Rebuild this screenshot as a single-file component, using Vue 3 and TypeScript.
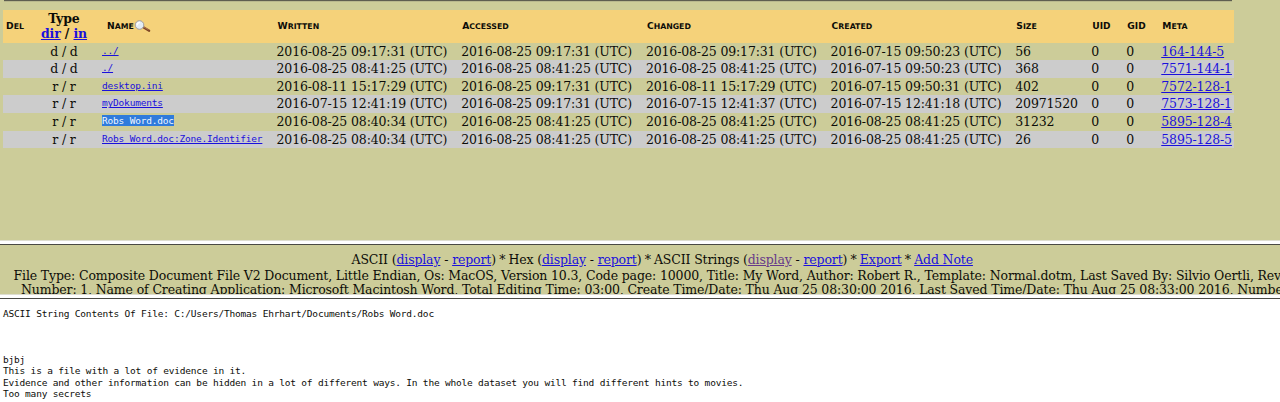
<script setup lang="ts">
interface Entry {
  type: string
  name: string
  dates: string[]
  size: string
  meta: string
  selected?: boolean
}

const columns: string[] = ['Written', 'Accessed', 'Changed', 'Created', 'Size', 'UID', 'GID', 'Meta']

const entries: Entry[] = [
  { type: 'd / d', name: '../', dates: ['2016-08-25 09:17:31', '2016-08-25 09:17:31', '2016-08-25 09:17:31', '2016-07-15 09:50:23'], size: '56', meta: '164-144-5' },
  { type: 'd / d', name: './', dates: ['2016-08-25 08:41:25', '2016-08-25 08:41:25', '2016-08-25 08:41:25', '2016-07-15 09:50:23'], size: '368', meta: '7571-144-1' },
  { type: 'r / r', name: 'desktop.ini', dates: ['2016-08-11 15:17:29', '2016-08-25 09:17:31', '2016-08-11 15:17:29', '2016-07-15 09:50:31'], size: '402', meta: '7572-128-1' },
  { type: 'r / r', name: 'myDokuments', dates: ['2016-07-15 12:41:19', '2016-08-25 09:17:31', '2016-07-15 12:41:37', '2016-07-15 12:41:18'], size: '20971520', meta: '7573-128-1' },
  { type: 'r / r', name: 'Robs Word.doc', dates: ['2016-08-25 08:40:34', '2016-08-25 08:41:25', '2016-08-25 08:41:25', '2016-08-25 08:41:25'], size: '31232', meta: '5895-128-4', selected: true },
  { type: 'r / r', name: 'Robs Word.doc:Zone.Identifier', dates: ['2016-08-25 08:40:34', '2016-08-25 08:41:25', '2016-08-25 08:41:25', '2016-08-25 08:41:25'], size: '26', meta: '5895-128-5' },
]

const contents = `ASCII String Contents Of File: C:/Users/Thomas Ehrhart/Documents/Robs Word.doc



bjbj
This is a file with a lot of evidence in it.
Evidence and other information can be hidden in a lot of different ways. In the whole dataset you will find different hints to movies.
Too many secrets`
</script>

<template>
  <div class="page">
    <section class="listing">
      <div class="rule"></div>
      <div class="files">
        <div class="row head">
          <span class="caps del">Del</span>
          <span class="type">Type<br><a href="#">dir</a> / <a href="#">in</a></span>
          <span class="name-head">
            <span class="caps">Name</span>
            <svg class="lens" viewBox="0 0 17 13" width="17" height="13">
              <path d="M9.3 7.2 L15.2 10.8" stroke="#7d4424" stroke-width="2.2" stroke-linecap="round" />
              <path d="M9.4 6.8 L14.6 9.8" stroke="#c89068" stroke-width=".6" />
              <circle cx="5.5" cy="5" r="4.3" fill="#e4edf5" stroke="#a09da0" stroke-width="1" />
              <path d="M3 5.3 Q3.3 2.6 6 2.4" fill="none" stroke="#fff" stroke-width="1.4" />
            </svg>
          </span>
          <span v-for="c in columns" :key="c" class="caps" :class="{ full: c === 'UID' || c === 'GID' }">{{ c }}</span>
        </div>
        <div v-for="e in entries" :key="e.name" class="row entry">
          <span></span>
          <span class="type">{{ e.type }}</span>
          <span class="name"><a href="#" :class="{ selected: e.selected }">{{ e.name }}</a></span>
          <span v-for="(d, i) in e.dates" :key="i">{{ d }} (UTC)</span>
          <span>{{ e.size }}</span>
          <span>0</span>
          <span>0</span>
          <span><a href="#">{{ e.meta }}</a></span>
        </div>
      </div>
    </section>
    <div class="splitter"></div>
    <section class="info">
      <div class="actions">ASCII (<a href="#">display</a> - <a href="#">report</a>)<i>*</i>Hex (<a href="#">display</a> - <a href="#">report</a>)<i>*</i>ASCII Strings (<a href="#" class="visited">display</a> - <a href="#">report</a>)<i>*</i><a href="#">Export</a><i>*</i><a href="#">Add Note</a></div>
      <div class="line first">File Type: Composite Document File V2 Document, Little Endian, Os: MacOS, Version 10.3, Code page: 10000, Title: My Word, Author: Robert R., Template: Normal.dotm, Last Saved By: Silvio Oertli, Rev</div>
      <div class="line second">Number: 1, Name of Creating Application: Microsoft Macintosh Word, Total Editing Time: 03:00, Create Time/Date: Thu Aug 25 08:30:00 2016, Last Saved Time/Date: Thu Aug 25 08:33:00 2016, Numbe</div>
    </section>
    <div class="splitter"></div>
    <pre class="contents">{{ contents }}</pre>
  </div>
</template>

<style>
body {
  margin: 0;
  overflow: hidden;
}
</style>

<style scoped>
.page {
  width: 1280px;
  height: 402px;
  overflow: hidden;
  background: #fff;
  color: #0c0c08;
  font: 12.5px/17.6px "DejaVu Serif", serif;
  letter-spacing: -0.14px;
}
a {
  color: #1a10dc;
  text-decoration: underline;
}
.listing {
  height: 240px;
  background: #cccc99;
}
.rule {
  height: 1px;
  width: 1228px;
  margin-left: 4px;
  background: #5d5d50;
  border-bottom: 1px solid #b8b88e;
}
.files {
  width: 1231px;
  margin: 8px 0 0 3px;
}
.row {
  display: grid;
  grid-template-columns: 24px 74px 175.5px 184.7px 184.7px 184.7px 184.7px 76px 35px 35px 72.7px;
  align-items: center;
  height: 17.6px;
  line-height: 18px;
  white-space: nowrap;
}
.head {
  height: 32.7px;
  background: #f5d27a;
}
.entry:nth-child(odd) {
  background: #cccccc;
}
.type {
  text-align: center;
}
.head .type {
  font-weight: bold;
  line-height: 15px;
  padding-bottom: 1px;
}
.caps {
  display: block;
  padding-left: 1px;
  font: bold 7.8px/12px "DejaVu Sans", sans-serif;
  letter-spacing: 0;
  text-transform: uppercase;
}
.caps::first-letter {
  font-size: 9.2px;
}
.full {
  font-size: 9px;
  padding-bottom: 1px;
}
.del {
  padding-left: 3px;
}
.name-head {
  display: flex;
  align-items: center;
  padding-left: 5px;
}
.name {
  font: 9.5px/11px "DejaVu Sans Mono", monospace;
  letter-spacing: -0.19px;
  padding: 0 0 3px 1px;
}
.selected {
  background: #2f7bdc;
  color: #eef5ff;
  text-decoration: none;
}
.splitter {
  height: 5px;
  box-sizing: border-box;
  background: #fff;
  border-top: 1px solid #deded0;
  border-bottom: 1px solid #4a4a44;
}
.info {
  height: 49px;
  overflow: hidden;
  background: #cccc99;
}
.actions {
  padding: 7px 0 0 351.5px;
  line-height: 16px;
  white-space: nowrap;
}
.actions i {
  font-style: normal;
  padding: 0 3.2px;
}
.visited {
  color: #66398a;
}
.line {
  white-space: nowrap;
  line-height: 15px;
}
.first {
  padding-left: 13.5px;
}
.second {
  padding-left: 21px;
  margin-top: -1px;
}
.contents {
  margin: 0;
  padding: 8.8px 0 0 3px;
  font: 9.5px/11.5px "DejaVu Sans Mono", monospace;
  letter-spacing: -0.195px;
}
</style>
